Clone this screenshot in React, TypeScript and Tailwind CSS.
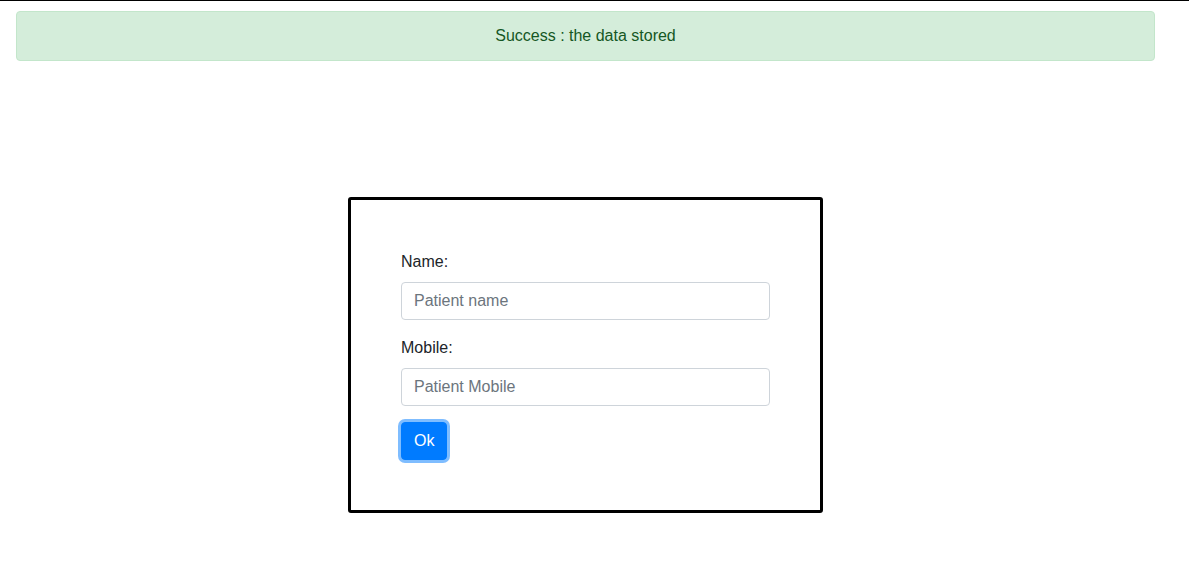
import { useState } from 'react';

export default function App() {
    const [name, setName] = useState('');
    const [mobile, setMobile] = useState('');

    return (
        <div className="min-h-[588px] w-full border-t border-black bg-white font-['Liberation_Sans',Arial,sans-serif] text-base text-[#212529]">
            <div className="ml-4 mr-[34px] mt-[10px] rounded border border-[#c3e6cb] bg-[#d4edda] px-5 py-3 text-center leading-6 text-[#155724]">
                Success : the data stored
            </div>

            <div className="mt-[136px] flex justify-center">
                <div className="ml-[-18px] w-[475px] rounded-[3px] border-[3px] border-black px-[50px] pb-[50px] pt-[50px]">
                    <div className="mb-4">
                        <label className="mb-2 block leading-6">Name:</label>
                        <input
                            type="text"
                            value={name}
                            onChange={(e) => setName(e.target.value)}
                            placeholder="Patient name"
                            className="block h-[38px] w-full rounded border border-[#ced4da] px-3 leading-6 text-[#495057] placeholder:text-[#6c757d] focus:outline-none"
                        />
                    </div>
                    <div className="mb-4">
                        <label className="mb-2 block leading-6">Mobile:</label>
                        <input
                            type="text"
                            value={mobile}
                            onChange={(e) => setMobile(e.target.value)}
                            placeholder="Patient Mobile"
                            className="block h-[38px] w-full rounded border border-[#ced4da] px-3 leading-6 text-[#495057] placeholder:text-[#6c757d] focus:outline-none"
                        />
                    </div>
                    <button
                        type="button"
                        className="h-[38px] rounded border border-[#007bff] bg-[#007bff] px-3 leading-6 text-white shadow-[0_0_0_3px_rgba(0,123,255,0.5)]"
                    >
                        Ok
                    </button>
                </div>
            </div>
        </div>
    );
}
